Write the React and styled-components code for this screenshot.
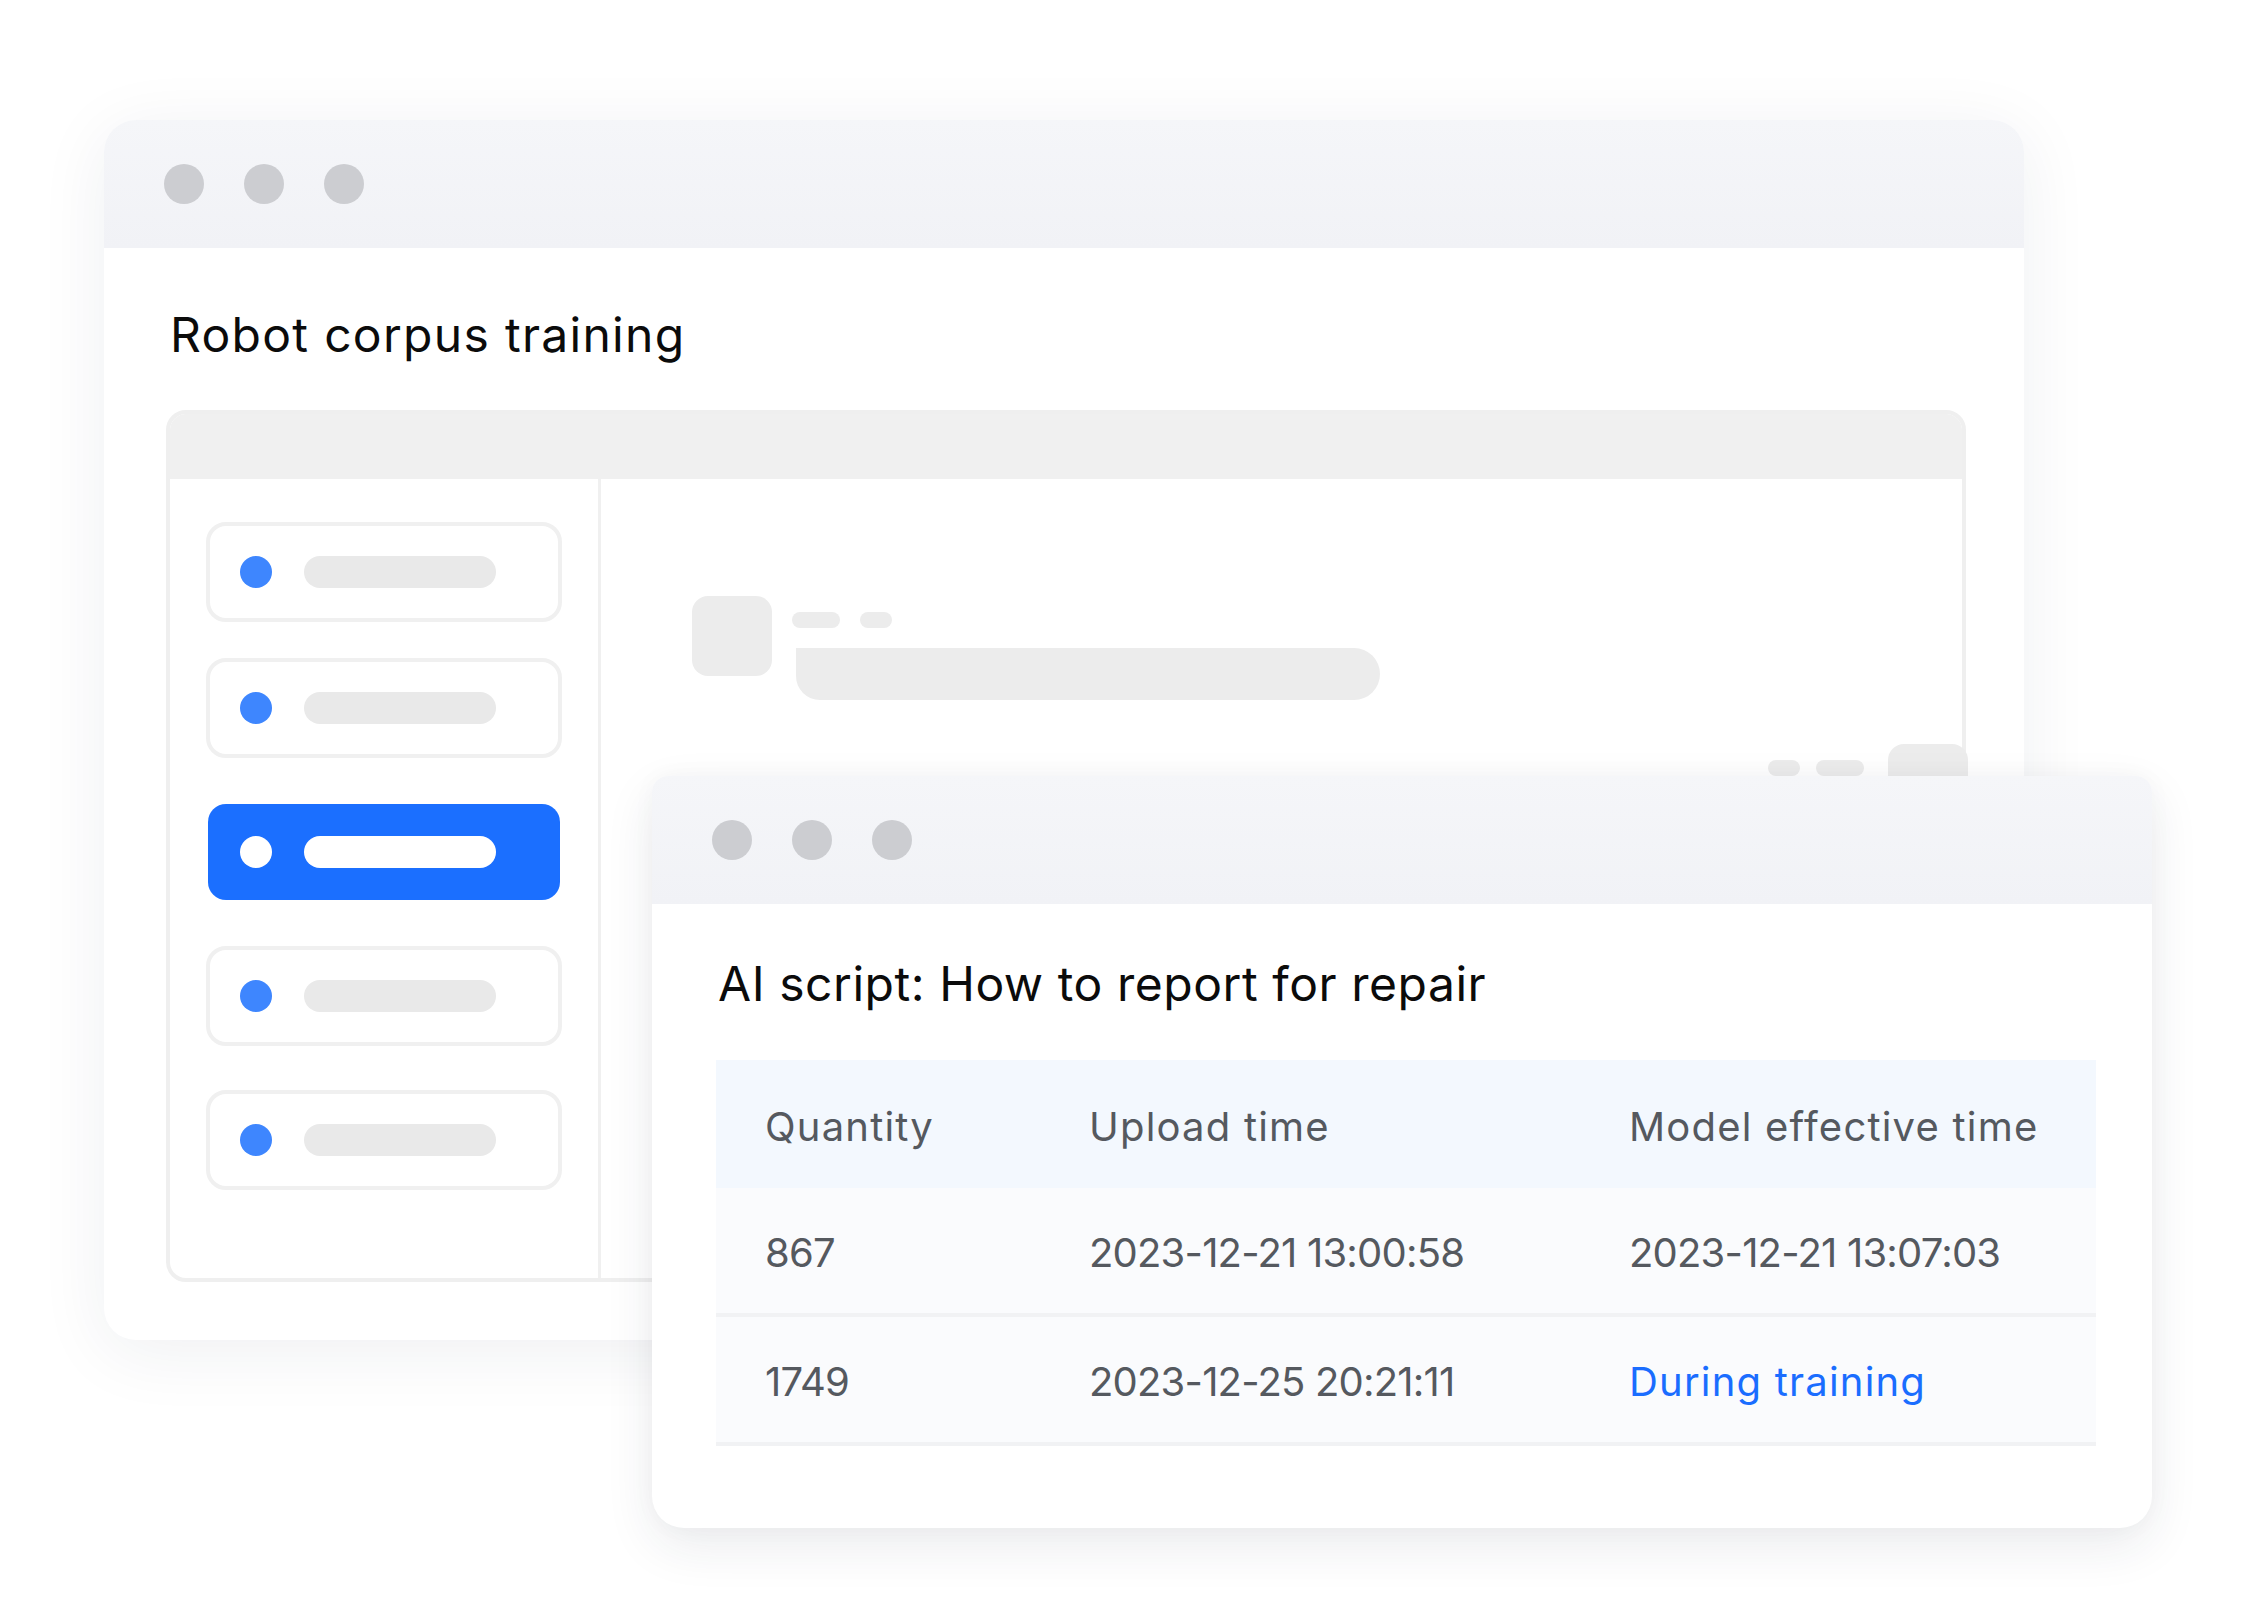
import React from "react";
import styled, { createGlobalStyle } from "styled-components";

const Global = createGlobalStyle`
  html, body { margin: 0; padding: 0; background: #ffffff; }
  body { font-family: "Inter", "Liberation Sans", sans-serif; }
  * { box-sizing: border-box; }
`;

const Stage = styled.div`
  position: relative;
  width: 2248px;
  height: 1624px;
  background: #ffffff;
  overflow: hidden;
`;

const Window = styled.div`
  position: absolute;
  left: ${(p) => p.$left}px;
  top: ${(p) => p.$top}px;
  width: ${(p) => p.$width}px;
  height: ${(p) => p.$height}px;
  border-radius: ${(p) => p.$radius};
  background: #ffffff;
  display: flex;
  flex-direction: column;
  overflow: hidden;
  box-shadow: ${(p) => p.$shadow};
`;

const TitleBar = styled.div`
  height: 128px;
  flex: none;
  display: flex;
  align-items: center;
  gap: 40px;
  padding-left: 60px;
  background: linear-gradient(180deg, #f5f6f9 0%, #f1f2f6 100%);
`;

const Light = styled.span`
  width: 40px;
  height: 40px;
  border-radius: 50%;
  background: #cccdd1;
`;

const BackBody = styled.div`
  flex: 1;
  display: flex;
  flex-direction: column;
  padding: 63px 58px 58px 62px;
  min-height: 0;
`;

const Heading = styled.h1`
  margin: 0 0 0 ${(p) => p.$indent}px;
  font-family: "Inter", "Liberation Sans", sans-serif;
  font-weight: 400;
  font-size: 48px;
  line-height: 1;
  color: #0b0b0b;
  letter-spacing: ${(p) => p.$track}px;
  white-space: nowrap;
`;

const Panel = styled.div`
  margin-top: 51px;
  flex: 1;
  display: flex;
  flex-direction: column;
  border: 4px solid #efefef;
  border-radius: 20px;
`;

const PanelHeader = styled.div`
  height: 65px;
  flex: none;
  background: #f0f0f0;
  border-radius: 16px 16px 0 0;
`;

const PanelBody = styled.div`
  flex: 1;
  display: flex;
`;

const Sidebar = styled.div`
  width: 431px;
  flex: none;
  border-right: 3px solid #f0f0f0;
  padding: 43px 0 0 36px;
  display: flex;
  flex-direction: column;
`;

const ListItem = styled.div`
  margin-top: ${(p) => p.$gap}px;
  width: 356px;
  height: 100px;
  border: 4px solid #f0f0f0;
  border-radius: 20px;
  background: #ffffff;
  display: flex;
  align-items: center;
  gap: 32px;
  padding-left: 30px;
`;

const ActiveItem = styled.div`
  margin: ${(p) => p.$gap + 4}px 0 4px 2px;
  width: 352px;
  height: 96px;
  border-radius: 18px;
  background: #1b6fff;
  display: flex;
  align-items: center;
  gap: 32px;
  padding-left: 32px;
`;

const Dot = styled.span`
  width: 32px;
  height: 32px;
  border-radius: 50%;
  background: ${(p) => (p.$active ? "#ffffff" : "#3e86fe")};
`;

const Bar = styled.span`
  width: 192px;
  height: 32px;
  border-radius: 16px;
  background: ${(p) => (p.$active ? "#ffffff" : "#e9e9e9")};
`;

const ChatArea = styled.div`
  flex: 1;
  margin-right: -6px;
  padding: 117px 0 0 91px;
  display: flex;
  flex-direction: column;
  gap: 44px;
`;

const MessageRow = styled.div`
  display: flex;
  justify-content: ${(p) => (p.$mine ? "flex-end" : "flex-start")};
  align-items: flex-start;
  gap: ${(p) => (p.$mine ? 24 : 20)}px;
`;

const Avatar = styled.span`
  width: 80px;
  height: 80px;
  flex: none;
  border-radius: 16px;
  background: #ececec;
`;

const MessageCol = styled.div`
  display: flex;
  flex-direction: column;
  align-items: ${(p) => (p.$mine ? "flex-end" : "flex-start")};
`;

const Meta = styled.div`
  margin-top: 16px;
  display: flex;
  gap: ${(p) => (p.$mine ? 16 : 20)}px;
`;

const Pill = styled.span`
  width: ${(p) => p.$w}px;
  height: 16px;
  border-radius: 8px;
  background: #ececec;
`;

const Bubble = styled.div`
  margin: 20px ${(p) => (p.$mine ? 4 : 0)}px 0 ${(p) => (p.$mine ? 0 : 4)}px;
  width: 584px;
  height: 52px;
  background: #ececec;
  border-radius: ${(p) => (p.$mine ? "26px 0 26px 26px" : "0 26px 26px 24px")};
`;

const FrontBody = styled.div`
  flex: 1;
  display: flex;
  flex-direction: column;
  padding: 56px 56px 0 64px;
`;

const Table = styled.div`
  margin-top: 52px;
  width: 1380px;
  display: flex;
  flex-direction: column;
`;

const Row = styled.div`
  display: grid;
  grid-template-columns: 324px 540px 1fr;
  align-items: center;
  padding: 5px 0 0 49px;
  height: ${(p) => (p.$head ? 128 : 129)}px;
  background: ${(p) => (p.$head ? "#f3f8fe" : "#fafbfd")};
  border-bottom: ${(p) => (p.$head ? "none" : "4px solid #f1f2f4")};
`;

const Cell = styled.div`
  font-family: "Inter", "Liberation Sans", sans-serif;
  font-size: 40px;
  line-height: 1;
  letter-spacing: ${(p) => (p.$numeric ? -0.8 : 1.2)}px;
  color: ${(p) => (p.$status ? "#1a6dff" : "#55595f")};
  white-space: nowrap;
`;

const items = [
  { gap: 0 },
  { gap: 36 },
  { gap: 42, active: true },
  { gap: 42 },
  { gap: 44 },
];

const rows = [
  ["867", "2023-12-21 13:00:58", "2023-12-21 13:07:03", false],
  ["1749", "2023-12-25 20:21:11", "During training", true],
];

function Lights() {
  return (
    <TitleBar>
      <Light />
      <Light />
      <Light />
    </TitleBar>
  );
}

export default function App() {
  return (
    <>
      <Global />
      <Stage>
        <Window
          $left={104}
          $top={120}
          $width={1920}
          $height={1220}
          $radius="32px"
          $shadow="0 12px 70px rgba(30, 40, 70, 0.07)"
        >
          <Lights />
          <BackBody>
            <Heading $indent={4} $track={1.3}>
              Robot corpus training
            </Heading>
            <Panel>
              <PanelHeader />
              <PanelBody>
                <Sidebar>
                  {items.map((it, i) =>
                    it.active ? (
                      <ActiveItem key={i} $gap={it.gap}>
                        <Dot $active />
                        <Bar $active />
                      </ActiveItem>
                    ) : (
                      <ListItem key={i} $gap={it.gap}>
                        <Dot />
                        <Bar />
                      </ListItem>
                    )
                  )}
                </Sidebar>
                <ChatArea>
                  <MessageRow>
                    <Avatar />
                    <MessageCol>
                      <Meta>
                        <Pill $w={48} />
                        <Pill $w={32} />
                      </Meta>
                      <Bubble />
                    </MessageCol>
                  </MessageRow>
                  <MessageRow $mine>
                    <MessageCol $mine>
                      <Meta $mine>
                        <Pill $w={32} />
                        <Pill $w={48} />
                      </Meta>
                      <Bubble $mine />
                    </MessageCol>
                    <Avatar />
                  </MessageRow>
                </ChatArea>
              </PanelBody>
            </Panel>
          </BackBody>
        </Window>

        <Window
          $left={652}
          $top={776}
          $width={1500}
          $height={752}
          $radius="16px 16px 32px 32px"
          $shadow="0 18px 50px rgba(30, 40, 70, 0.09), 0 0 24px rgba(30, 40, 70, 0.03)"
        >
          <Lights />
          <FrontBody>
            <Heading $indent={2} $track={0.55}>
              AI script: How to report for repair
            </Heading>
            <Table>
              <Row $head>
                <Cell>Quantity</Cell>
                <Cell>Upload time</Cell>
                <Cell>Model effective time</Cell>
              </Row>
              {rows.map(([q, up, model, status]) => (
                <Row key={q}>
                  <Cell $numeric>{q}</Cell>
                  <Cell $numeric>{up}</Cell>
                  <Cell $numeric={!status} $status={status}>
                    {model}
                  </Cell>
                </Row>
              ))}
            </Table>
          </FrontBody>
        </Window>
      </Stage>
    </>
  );
}
